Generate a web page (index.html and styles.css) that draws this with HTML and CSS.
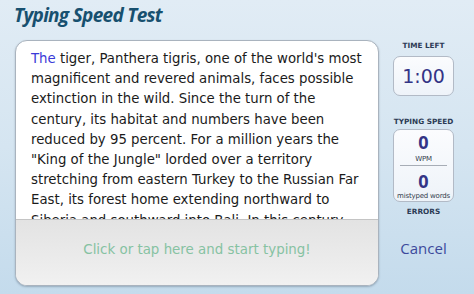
FILE: index.html
```html
<!DOCTYPE html>
<html>
<head>
<meta charset="utf-8">
<link rel="stylesheet" href="styles.css">
</head>
<body>
<div class="page">
  <h1 class="title">Typing Speed Test</h1>
  <div class="main">
    <div class="card">
      <div class="passage">
        <span class="current">The</span> tiger, Panthera tigris, one of the world's most<br>
        magnificent and revered animals, faces possible<br>
        extinction in the wild. Since the turn of the<br>
        century, its habitat and numbers have been<br>
        reduced by 95 percent. For a million years the<br>
        "King of the Jungle" lorded over a territory<br>
        stretching from eastern Turkey to the Russian Far<br>
        East, its forest home extending northward to<br>
        Siberia and southward into Bali. In this century,
      </div>
      <div class="prompt">Click or tap here and start typing!</div>
    </div>
    <div class="side">
      <div class="label">TIME LEFT</div>
      <div class="box timer">1:00</div>
      <div class="label label-speed">TYPING SPEED</div>
      <div class="box stats">
        <div class="num">0</div>
        <div class="unit">WPM</div>
        <div class="divider"></div>
        <div class="num">0</div>
        <div class="unit unit-err">mistyped words</div>
      </div>
      <div class="label label-err">ERRORS</div>
      <div class="cancel">Cancel</div>
    </div>
  </div>
</div>
</body>
</html>
```
FILE: styles.css
```css
html, body {
  margin: 0;
  padding: 0;
}
body {
  width: 474px;
  height: 294px;
  overflow: hidden;
  background: linear-gradient(180deg, #e1ecf5 0%, #d5e5f1 50%, #c4dbec 100%);
  font-family: "DejaVu Sans", Verdana, sans-serif;
}
.page {
  display: flex;
  flex-direction: column;
  height: 294px;
}
.title {
  margin: 0;
  height: 40px;
  box-sizing: border-box;
  padding: 2px 0 0 14px;
  font-family: "Open Sans", sans-serif;
  font-weight: 700;
  font-style: italic;
  font-size: 19px;
  letter-spacing: -0.7px;
  color: #17506f;
  line-height: 26px;
}
.main {
  display: flex;
  padding-left: 15px;
}
.card {
  width: 362px;
  height: 244px;
  flex: none;
  border: 1px solid #a9b3be;
  border-radius: 12px;
  background: #ffffff;
  overflow: hidden;
  display: flex;
  flex-direction: column;
  box-shadow: 0 1px 2px rgba(60, 80, 100, 0.35);
}
.passage {
  height: 170px;
  flex: none;
  overflow: hidden;
  padding: 8px 0 0 15px;
  font-size: 13.3px;
  line-height: 20.2px;
  color: #1b1b1b;
  white-space: nowrap;
}
.current {
  color: #3a3ad8;
}
.prompt {
  flex: 1;
  border-top: 1px solid #c4c4c4;
  background: linear-gradient(180deg, #e3e3e3 0%, #ebebeb 60%, #f1f1f1 100%);
  display: flex;
  align-items: center;
  justify-content: center;
  font-size: 13.4px;
  color: #86c2a2;
  padding-bottom: 6px;
}
.side {
  flex: 1;
  display: flex;
  flex-direction: column;
  align-items: center;
  padding-top: 1px;
  padding-right: 6px;
}
.label {
  font-size: 7.3px;
  font-weight: 700;
  color: #2c3b55;
  line-height: 10px;
  white-space: nowrap;
}
.box {
  width: 61px;
  border: 1px solid #b2bac6;
  border-radius: 7px;
  background: linear-gradient(180deg, #fbfcfe 0%, #eef3f9 100%);
  box-sizing: border-box;
}
.timer {
  margin-top: 5px;
  height: 40px;
  display: flex;
  align-items: center;
  justify-content: center;
  font-size: 19px;
  color: #343486;
}
.label-speed {
  margin-top: 21px;
}
.stats {
  margin-top: 2px;
  height: 73px;
  display: flex;
  flex-direction: column;
  align-items: center;
  padding-top: 2px;
}
.num {
  font-family: "Open Sans", sans-serif;
  font-size: 18px;
  font-weight: 700;
  color: #343486;
  line-height: 20px;
  height: 20px;
}
.unit {
  font-size: 7px;
  color: #333d4c;
  line-height: 10px;
  white-space: nowrap;
  letter-spacing: -0.2px;
  margin-top: 2px;
}
.unit-err {
  margin-top: 1px;
  line-height: 8px;
}
.divider {
  width: 47px;
  height: 1px;
  background: #a7adb6;
  margin: 1px 0 5px;
}
.label-err {
  margin-top: 5px;
}
.cancel {
  margin-top: 21px;
  font-family: "Open Sans", sans-serif;
  font-size: 15px;
  line-height: 20px;
  color: #3c4a9c;
}
```
